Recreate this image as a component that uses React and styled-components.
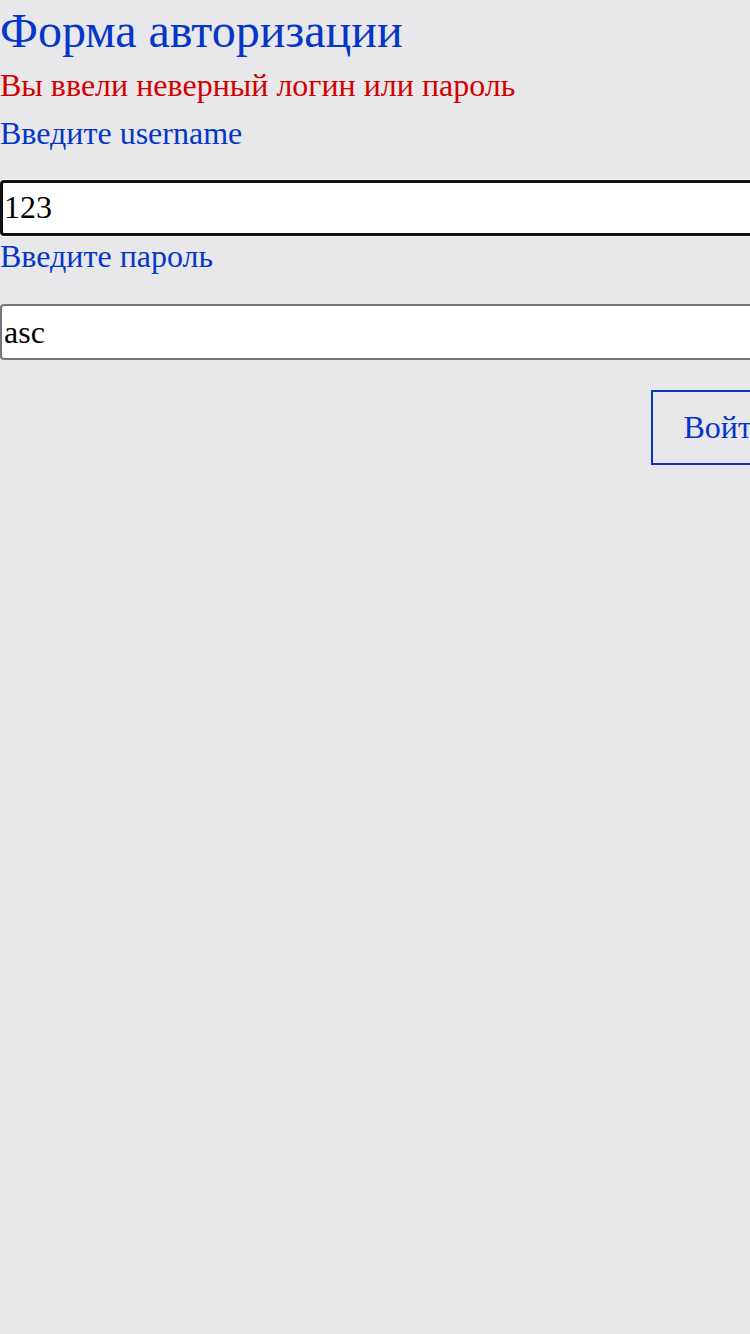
import styled, { createGlobalStyle } from "styled-components";
import { useState } from "react";

const GlobalStyle = createGlobalStyle`
  html, body {
    margin: 0;
    padding: 0;
    background: #e8e8ea;
    overflow: hidden;
  }
  body {
    font-family: "Liberation Serif", "Times New Roman", serif;
  }
`;

export default function App() {
  const [username, setUsername] = useState("123");
  const [password, setPassword] = useState("asc");

  return (
    <>
      <GlobalStyle />
      <Page>
        <Form onSubmit={(e) => e.preventDefault()}>
          <Title>Форма авторизации</Title>
          <ErrorText>Вы ввели неверный логин или пароль</ErrorText>

          <Label $first>Введите username</Label>
          <Input
            $focused
            value={username}
            onChange={(e) => setUsername(e.target.value)}
          />

          <Label>Введите пароль</Label>
          <Input value={password} onChange={(e) => setPassword(e.target.value)} />

          <SubmitButton type="submit">Войти</SubmitButton>
        </Form>
      </Page>
    </>
  );
}

const Page = styled.div`
  width: 750px;
  min-height: 1334px;
  overflow: hidden;
`;

const Form = styled.form`
  width: 799px;
  display: flex;
  flex-direction: column;
`;

const Title = styled.h1`
  margin: 3px 0 8px;
  color: #0536c8;
  font-size: 48px;
  font-weight: 400;
  line-height: 56px;
`;

const ErrorText = styled.div`
  color: #d40000;
  font-size: 32px;
  line-height: 37px;
`;

const Label = styled.label`
  display: block;
  margin: ${({ $first }) => ($first ? "11px" : "2px")} 0 ${({ $first }) => ($first ? "28px" : "29px")};
  color: #0536c8;
  font-size: 32px;
  line-height: 37px;
`;

const Input = styled.input`
  box-sizing: border-box;
  width: 100%;
  height: 56px;
  padding: ${({ $focused }) => ($focused ? "0 0 2px 1px" : "0 2px")};
  border: ${({ $focused }) => ($focused ? "3px solid #111" : "2px solid #767676")};
  border-radius: 4px;
  background: #fff;
  box-shadow: ${({ $focused }) => ($focused ? "0 0 0 1px #fff" : "none")};
  color: #000;
  font-family: "Liberation Serif", "Times New Roman", serif;
  font-size: 32px;
  outline: none;
`;

const SubmitButton = styled.button`
  align-self: flex-end;
  margin-top: 30px;
  height: 75px;
  padding: 0 28px 0 30px;
  border: 2px solid #0536c8;
  background: transparent;
  color: #0536c8;
  font-family: "Liberation Serif", "Times New Roman", serif;
  font-size: 32px;
  cursor: pointer;
`;
